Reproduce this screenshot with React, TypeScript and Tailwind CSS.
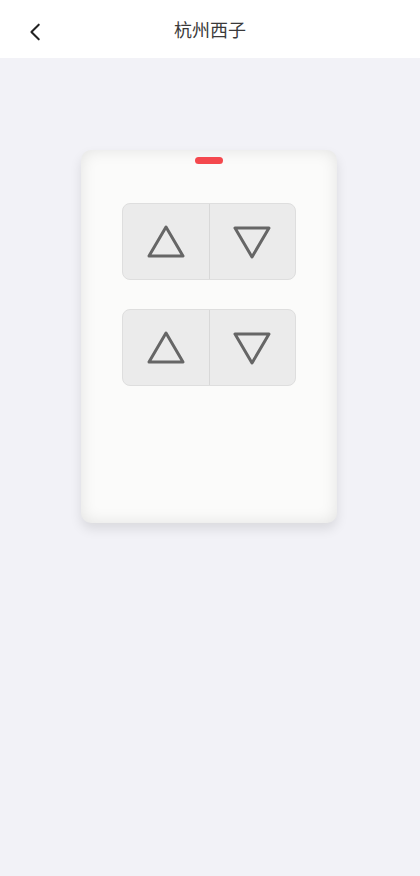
import React from 'react'

function Up() {
  return (
    <svg width="40" height="36" viewBox="0 0 40 36" fill="none">
      <path d="M20 3 L37 32 H3 Z" stroke="#666" strokeWidth="3" strokeLinejoin="round" />
    </svg>
  )
}

function Down() {
  return (
    <svg width="40" height="36" viewBox="0 0 40 36" fill="none">
      <path d="M3 4 H37 L20 33 Z" stroke="#666" strokeWidth="3" strokeLinejoin="round" />
    </svg>
  )
}

function Pair() {
  return (
    <div className="flex h-[77px] w-[174px] overflow-hidden rounded-[8px] border border-[#dedede] bg-[#ebebeb]">
      <button className="flex flex-1 items-center justify-center border-r border-[#d8d8d8]">
        <Up />
      </button>
      <button className="flex flex-1 items-center justify-center">
        <Down />
      </button>
    </div>
  )
}

export default function App() {
  return (
    <div className="flex min-h-[876px] flex-col bg-[#f2f2f7]" style={{ fontFamily: '"Noto Sans CJK SC", "Noto Sans", sans-serif' }}>
      <div className="relative flex h-[58px] items-center justify-center bg-white">
        <button className="absolute left-[24px] top-[20px] flex h-[24px] w-[24px] items-center justify-center">
          <svg width="22" height="22" viewBox="0 0 24 24" fill="none">
            <path d="M15 4 L7 12 L15 20" stroke="#222" strokeWidth="2.2" strokeLinecap="round" strokeLinejoin="round" />
          </svg>
        </button>
        <span className="text-[18px] text-[#3a3a3a]">杭州西子</span>
      </div>
      <div className="flex justify-center pr-[2px] pt-[92px]">
        <div className="flex h-[373px] w-[256px] flex-col items-center rounded-[10px] bg-[#fbfbfa] pt-[7px] shadow-[inset_0_0_16px_rgba(0,0,0,0.1),0_6px_12px_rgba(0,0,0,0.1)]">
          <div className="h-[7px] w-[28px] rounded-full bg-[#f4484d]" />
          <div className="mt-[39px] flex flex-col gap-[29px]">
            <Pair />
            <Pair />
          </div>
        </div>
      </div>
    </div>
  )
}
